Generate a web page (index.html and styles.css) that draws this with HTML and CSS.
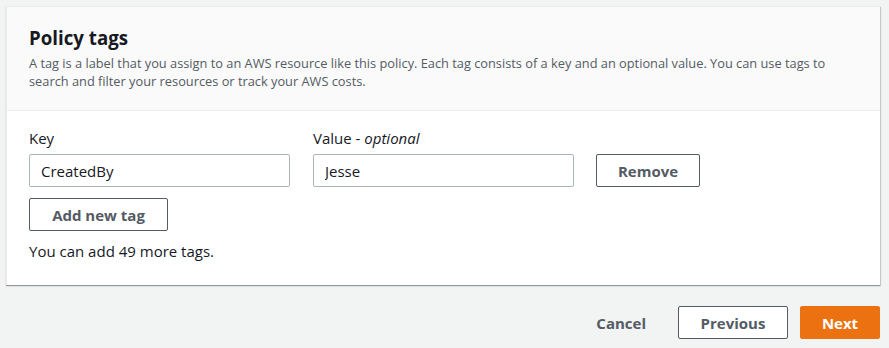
FILE: index.html
```html
<!DOCTYPE html>
<html lang="en">
    <head>
        <title>Policy tags</title>
        <link rel="stylesheet" href="styles.css">
    </head>
    <body>
        <div class="panel">
            <div class="panel-header">
                <h2>Policy tags</h2>
                <p>A tag is a label that you assign to an AWS resource like this policy. Each tag consists of a key and an optional value. You can use tags to search and filter your resources or track your AWS costs.</p>
            </div>
            <div class="panel-body">
                <div class="tag-row">
                    <div class="field field-key">
                        <label>Key</label>
                        <input type="text" value="CreatedBy">
                    </div>
                    <div class="field">
                        <label>Value - <i>optional</i></label>
                        <input type="text" value="Jesse">
                    </div>
                    <button class="btn btn-remove">Remove</button>
                </div>
                <button class="btn btn-add">Add new tag</button>
                <p class="hint">You can add 49 more tags.</p>
            </div>
        </div>

        <div class="actions">
            <button class="btn-link">Cancel</button>
            <button class="btn btn-prev">Previous</button>
            <button class="btn btn-primary">Next</button>
        </div>
    </body>
</html>
```

FILE: styles.css
```css
body
{
    margin: 0;
    padding: 6px 9px 0 6px;
    background-color: #f2f3f3;
    color: #16191f;
    font-family: 'Open Sans', sans-serif;
    font-size: 15px;
}

.panel
{
    background-color: white;
    border-left: 1px solid #eaeded;
    border-top: 1px solid #eaeded;
    box-shadow: 0 1px 1px 0 rgba(0, 28, 36, 0.3), 1px 1px 1px 0 rgba(0, 28, 36, 0.15);
}

.panel-header
{
    background-color: #fafafa;
    border-bottom: 1px solid #eaeded;
    padding: 19px 40px 20px 22px;
}

.panel-header h2
{
    margin: 0 0 4px 0;
    font-size: 18.7px;
    font-weight: 700;
    line-height: 24px;
}

.panel-header p
{
    margin: 0;
    font-size: 12.8px;
    line-height: 18px;
    color: #545b64;
}

.panel-body
{
    padding: 17px 22px 24px 22px;
}

.tag-row
{
    display: flex;
    align-items: flex-end;
    gap: 22px;
}

.field
{
    display: flex;
    flex-direction: column;
}

.field-key
{
    margin-right: 1px;
}

.field label
{
    line-height: 20px;
    margin-bottom: 6px;
}

.field input
{
    width: 261px;
    height: 33px;
    box-sizing: border-box;
    border: 1px solid #aab7b8;
    border-radius: 2px;
    padding: 0 11px;
    font-family: 'Open Sans', sans-serif;
    font-size: 15px;
    color: #16191f;
}

.btn
{
    box-sizing: border-box;
    height: 33px;
    background-color: white;
    border: 1px solid #545b64;
    border-radius: 2px;
    color: #545b64;
    font-family: 'Open Sans', sans-serif;
    font-size: 15px;
    font-weight: 700;
    padding: 0 10px;
}

.btn-remove
{
    width: 104px;
}

.btn-add
{
    margin-top: 11px;
    width: 139px;
}

.hint
{
    margin: 10px 0 0 0;
    line-height: 20px;
}

.actions
{
    display: flex;
    justify-content: flex-end;
    align-items: center;
    gap: 12px;
    margin-top: 21px;
}

.btn-link
{
    background: none;
    border: none;
    color: #545b64;
    font-family: 'Open Sans', sans-serif;
    font-size: 15px;
    font-weight: 700;
    padding: 0 20px;
}

.btn-prev
{
    width: 110px;
}

.btn-primary
{
    width: 80px;
    background-color: #ec7211;
    border-color: #ec7211;
    color: white;
}
```
